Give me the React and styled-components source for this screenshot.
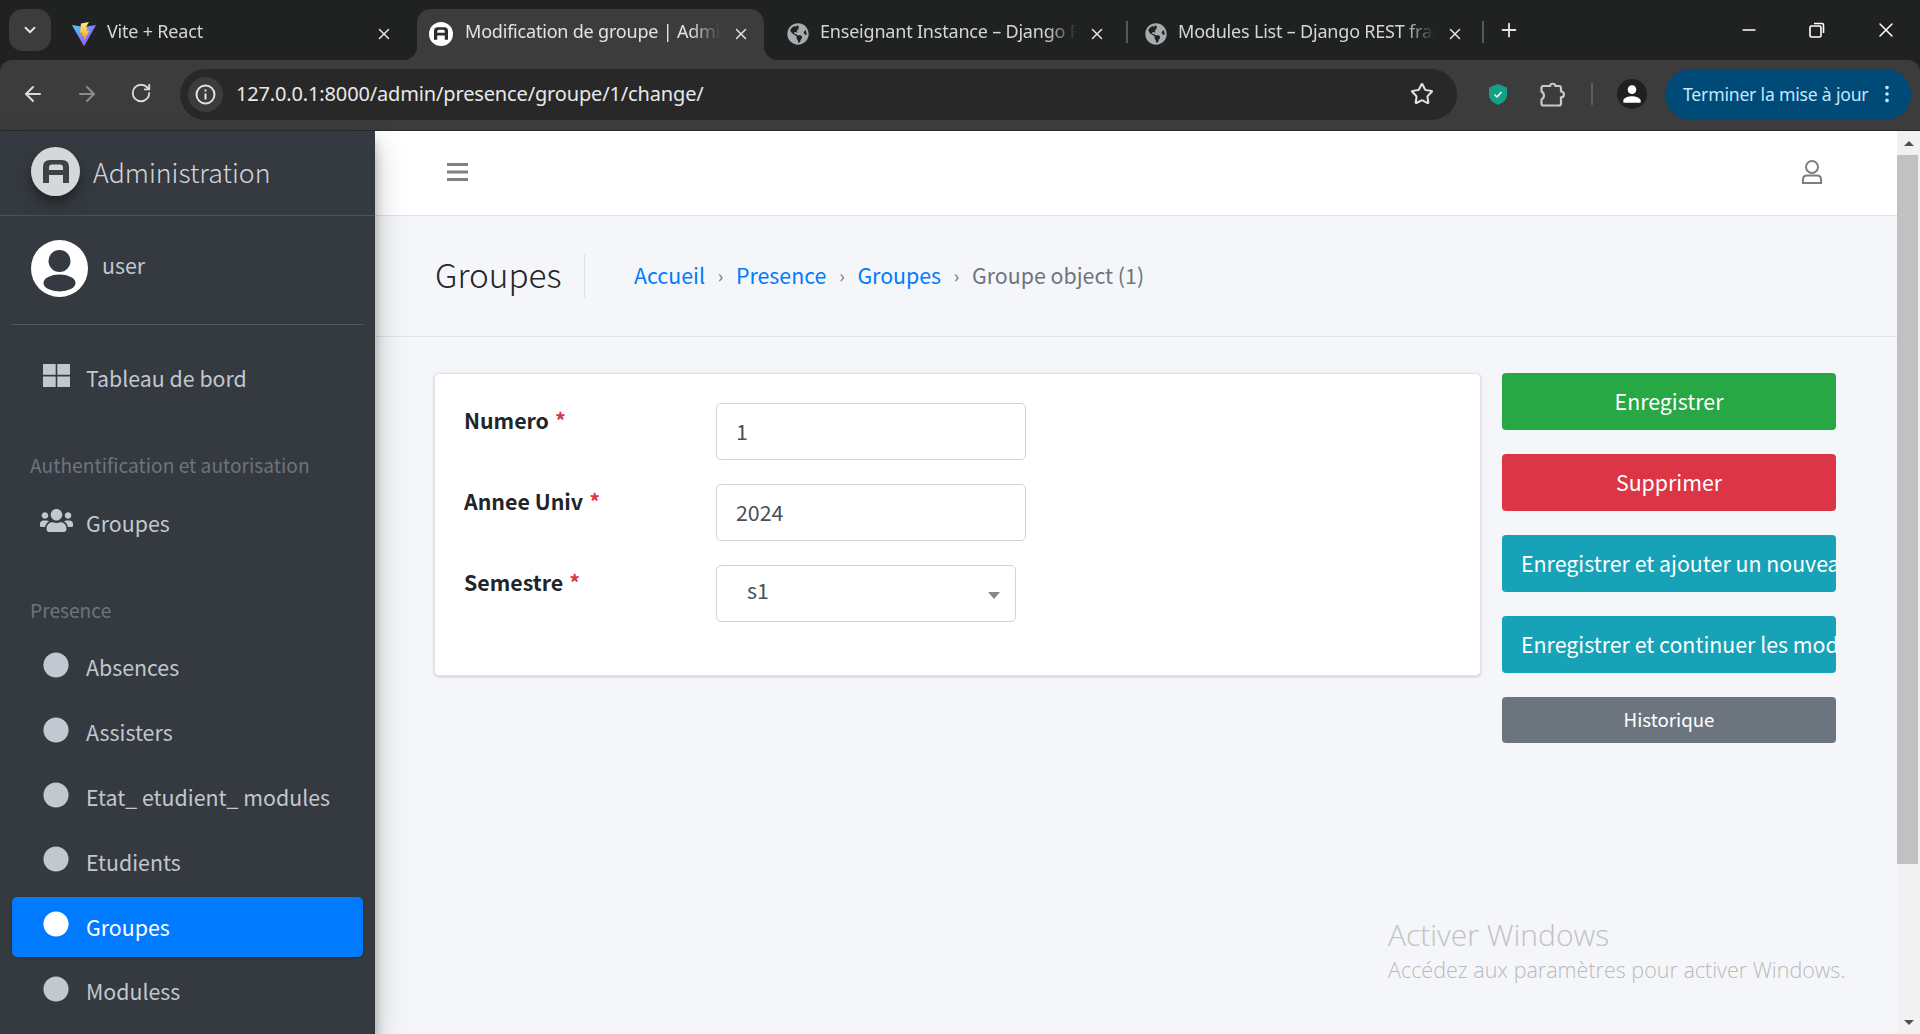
import React from "react";
import styled, { createGlobalStyle } from "styled-components";
import { ArrowLeft, ArrowRight, RotateCw, Star, X, Plus, Minus, ChevronDown, EllipsisVertical } from "lucide-react";
import { FaUsers, FaGlobeAmericas, FaCircle } from "react-icons/fa";
import { MdPerson } from "react-icons/md";

const siteFont = `"Noto Sans CJK SC", "Open Sans", sans-serif`;
const chromeFont = `"Noto Sans", "Open Sans", sans-serif`;

const GlobalStyle = createGlobalStyle`
  html, body {
    margin: 0;
    height: 100%;
    overflow: hidden;
    background: #f4f6f9;
  }
  * { box-sizing: border-box; }
`;

const Page = styled.div`
  width: 1920px;
  height: 1034px;
  display: flex;
  flex-direction: column;
  overflow: hidden;
  background: #202222;
  font-family: ${siteFont};
`;

/* browser frame */
const TabStrip = styled.div`
  height: 60px;
  flex: none;
  display: flex;
  padding: 9px 0 0 9px;
  font-family: ${chromeFont};
  color: #e3e3e3;
`;

const TabSearch = styled.div`
  width: 42px;
  height: 42px;
  border-radius: 14px;
  background: #3c3c3c;
  display: flex;
  align-items: center;
  justify-content: center;
  margin-right: 9px;
  color: #e3e3e3;
`;

const Tab = styled.div`
  position: relative;
  width: ${(p) => p.$width}px;
  height: 51px;
  flex: none;
  display: flex;
  align-items: center;
  padding: 0 ${(p) => p.$right}px 2px ${(p) => p.$pad}px;
  gap: 11px;
  background: ${(p) => (p.$active ? "#3c3c3c" : "transparent")};
  border-radius: 14px 14px 0 0;
  ${(p) =>
    p.$active &&
    `
    &::before, &::after {
      content: "";
      position: absolute;
      bottom: 0;
      width: 14px;
      height: 14px;
    }
    &::before { left: -14px; background: radial-gradient(circle at 0 0, transparent 14px, #3c3c3c 14.5px); }
    &::after { right: -14px; background: radial-gradient(circle at 100% 0, transparent 14px, #3c3c3c 14.5px); }
  `}
`;

const TabTitle = styled.span`
  flex: 1;
  min-width: 0;
  overflow: hidden;
  white-space: nowrap;
  font-size: 18px;
  line-height: 24px;
  letter-spacing: -0.2px;
  padding-bottom: 3px;
  margin-top: -3px;
  padding-left: ${(p) => (p.$active ? 1 : 0)}px;
  color: ${(p) => (p.$active ? "#e3e3e3" : "#d5d6d6")};
  -webkit-mask-image: linear-gradient(to right, #000 88%, transparent 100%);
  mask-image: linear-gradient(to right, #000 88%, transparent 100%);
`;

const TabFavicon = styled.span`
  width: 24px;
  height: 24px;
  flex: none;
  border-radius: 50%;
  background: #fff;
  display: flex;
  align-items: center;
  justify-content: center;
`;

const TabSeparator = styled.div`
  width: 2px;
  height: 22px;
  flex: none;
  align-self: center;
  margin-bottom: 6px;
  background: #55585a;
`;

const NewTab = styled.div`
  width: 50px;
  height: 42px;
  display: flex;
  align-items: center;
  justify-content: center;
  color: #e3e3e3;
`;

const WindowControls = styled.div`
  margin-left: auto;
  display: flex;
  height: 42px;
  align-items: center;
  color: #fff;
`;

const WindowButton = styled.div`
  width: 68px;
  display: flex;
  justify-content: center;
  &:last-child {
    margin-left: 1px;
  }
`;

const Toolbar = styled.div`
  height: 71px;
  flex: none;
  display: flex;
  align-items: center;
  background: #3c3c3c;
  border-radius: 12px 12px 0 0;
  border-bottom: 1px solid #2a2a2a;
  padding: 0 9px 2px 0;
  font-family: ${chromeFont};
  color: #e3e3e3;
`;

const NavIcon = styled.div`
  width: 54px;
  display: flex;
  justify-content: center;
  flex: none;
  color: ${(p) => (p.$dim ? "#8a8b8b" : "#d9dadb")};
`;

const NavIcons = styled.div`
  display: flex;
  padding-left: 6px;
  width: 180px;
  flex: none;
`;

const Omnibox = styled.div`
  width: 1277px;
  height: 51px;
  flex: none;
  display: flex;
  align-items: center;
  border-radius: 26px;
  background: #282828;
  padding: 0 23px 0 8px;
`;

const InfoBadge = styled.div`
  width: 35px;
  height: 35px;
  border-radius: 50%;
  background: #3c3c3c;
  display: flex;
  align-items: center;
  justify-content: center;
  margin-right: 13px;
`;

const UrlText = styled.span`
  flex: 1;
  font-size: 20px;
  line-height: 28px;
  letter-spacing: -0.15px;
  color: #e8e8e8;
`;

const ToolbarRight = styled.div`
  flex: 1;
  display: flex;
  align-items: center;
`;

const ToolIcon = styled.div`
  width: ${(p) => p.$w}px;
  flex: none;
  display: flex;
  justify-content: center;
  color: #c8c9c9;
`;

const ToolDivider = styled.div`
  width: 2px;
  height: 22px;
  flex: none;
  background: #5a5c5d;
`;

const Profile = styled.div`
  width: 30px;
  height: 30px;
  border-radius: 50%;
  background: #202020;
  color: #fff;
  display: flex;
  align-items: center;
  justify-content: center;
  flex: none;
`;

const UpdatePill = styled.div`
  width: 246px;
  height: 51px;
  margin-left: auto;
  flex: none;
  display: flex;
  align-items: center;
  justify-content: space-between;
  border-radius: 26px;
  background: #004a77;
  padding: 0 13px 0 18px;
  color: #c2e7ff;
  font-size: 17.6px;
  letter-spacing: -0.2px;
  white-space: nowrap;
`;

/* admin page */
const Body = styled.div`
  flex: 1;
  min-height: 0;
  display: flex;
`;

const Sidebar = styled.aside`
  width: 375px;
  flex: none;
  background: #343a40;
  position: relative;
  z-index: 2;
  box-shadow: 0 14px 28px rgba(0, 0, 0, 0.25), 0 10px 10px rgba(0, 0, 0, 0.22);
`;

const Brand = styled.div`
  height: 85px;
  display: flex;
  align-items: center;
  gap: 13px;
  padding: 0 0 4px 31px;
  border-bottom: 1px solid #4b545c;
`;

const BrandLogo = styled.div`
  width: 49px;
  height: 49px;
  flex: none;
  border-radius: 50%;
  background: #d6d7d9;
  display: flex;
  align-items: center;
  justify-content: center;
  box-shadow: 0 10px 20px rgba(0, 0, 0, 0.19), 0 6px 6px rgba(0, 0, 0, 0.23);
`;

const BrandText = styled.span`
  font-size: 26.7px;
  line-height: 40px;
  margin-top: 2px;
  font-weight: 300;
  color: rgba(255, 255, 255, 0.8);
`;

const UserPanel = styled.div`
  margin: 0 12px;
  height: 109px;
  padding: 24px 0 0 19px;
  display: flex;
  gap: 14px;
  border-bottom: 1px solid #4f5962;
`;

const UserName = styled.span`
  font-size: 21.35px;
  line-height: 36px;
  margin-top: 7px;
  color: #c2c7d0;
`;

const Nav = styled.nav`
  padding: 23px 12px 0;
  display: flex;
  flex-direction: column;
  gap: 5px;
`;

const NavHeader = styled.div`
  padding: 34px 0 5px 18px;
  font-size: 19.2px;
  line-height: 36px;
  color: #6c757d;
  white-space: nowrap;
`;

const NavLink = styled.a`
  height: 59.8px;
  display: flex;
  align-items: center;
  border-radius: 5px;
  background: ${(p) => (p.$active ? "#007bff" : "transparent")};
  color: ${(p) => (p.$active ? "#fff" : "#c2c7d0")};
  box-shadow: ${(p) => (p.$active ? "0 1px 3px rgba(0,0,0,.2)" : "none")};
`;

const NavIconBox = styled.span`
  width: 74px;
  flex: none;
  padding: 0 0 5px 31px;
  display: flex;
`;

const GroupIcon = styled(FaUsers)`
  margin-left: -3px;
  flex: none;
`;

const NavLabel = styled.span`
  font-size: 21.35px;
  line-height: 36px;
`;

const Main = styled.main`
  flex: 1;
  min-width: 0;
  position: relative;
  background: #f4f6f9;
`;

const TopBar = styled.div`
  height: 85px;
  display: flex;
  align-items: center;
  justify-content: space-between;
  padding: 0 75px 3px 72px;
  background: #fff;
  border-bottom: 1px solid #dee2e6;
`;

const PageHeader = styled.div`
  height: 121px;
  display: flex;
  align-items: center;
  padding-left: 60px;
  border-bottom: 1px solid #dee2e6;
`;

const Title = styled.h1`
  margin: 0;
  width: 150px;
  height: 44px;
  border-right: 1px solid #dfe2e6;
  font-size: 33.3px;
  line-height: 40px;
  font-weight: 300;
  color: #212529;
`;

const Crumbs = styled.div`
  margin-left: 49px;
  padding-bottom: 2px;
  display: flex;
  align-items: center;
  font-size: 21.35px;
  line-height: 36px;
  color: #6c757d;
  white-space: nowrap;
`;

const Crumb = styled.a`
  color: #007bff;
`;

const CrumbSep = styled.span`
  width: ${(p) => p.$w}px;
  text-align: center;
  font-size: 18px;
`;

const Content = styled.div`
  display: flex;
  gap: 21px;
  padding: 36px 61px 0 59px;
`;

const Card = styled.form`
  flex: 1;
  height: 303px;
  padding: 29px 0 0 29px;
  background: #fff;
  border: 1px solid #e2e4e8;
  border-radius: 5px;
  box-shadow: 0 1px 3px rgba(0, 0, 0, 0.18);
  display: grid;
  grid-template-columns: 252px 1fr;
  grid-auto-rows: 57px;
  row-gap: 24px;
`;

const FieldLabel = styled.label`
  font-size: 21.35px;
  line-height: 36px;
  margin-top: -1px;
  font-weight: 700;
  color: #212529;
`;

const Required = styled.span`
  color: #dc3545;
  margin-left: 6px;
`;

const TextInput = styled.input`
  width: 310px;
  height: 57px;
  padding: 0 19px 3px;
  border: 1px solid #ced4da;
  border-radius: 5px;
  background: #fff;
  font-family: ${siteFont};
  font-size: 21.35px;
  color: #495057;
  outline: none;
`;

const SelectBox = styled.div`
  position: relative;
  width: 300px;
  height: 57px;
  border: 1px solid #ced4da;
  border-radius: 5px;
  display: flex;
  align-items: center;
  padding: 0 0 9px 30px;
  font-size: 21.35px;
  color: #495057;
  &::after {
    content: "";
    position: absolute;
    right: 15px;
    top: 26px;
    border-style: solid;
    border-width: 7px 6px 0 6px;
    border-color: #888 transparent transparent transparent;
  }
`;

const Actions = styled.div`
  width: 334px;
  flex: none;
  display: flex;
  flex-direction: column;
  gap: 24px;
`;

const ActionButton = styled.a`
  height: ${(p) => (p.$small ? 46 : 57)}px;
  display: block;
  padding: 0 ${(p) => (p.$small ? 0 : 19)}px;
  background: ${(p) => p.$bg};
  border-radius: 4px;
  color: #fff;
  font-size: ${(p) => (p.$small ? 18.7 : 21.35)}px;
  line-height: ${(p) => (p.$small ? 44 : 55)}px;
  text-align: center;
  white-space: nowrap;
  overflow: hidden;
`;

const Watermark = styled.div`
  position: absolute;
  left: 1013px;
  top: 784px;
  font-family: "Open Sans", sans-serif;
  font-weight: 300;
  color: #c1c2c4;
  white-space: nowrap;
`;

const WatermarkTitle = styled.div`
  font-size: 30px;
  line-height: 40px;
`;

const WatermarkSub = styled.div`
  font-size: 21.5px;
  line-height: 30px;
  color: #b9babc;
`;

const ScrollTrack = styled.div`
  width: 23px;
  flex: none;
  display: flex;
  flex-direction: column;
  background: #f1f1f1;
`;

const ScrollArrow = styled.div`
  height: 24px;
  flex: none;
  margin-top: ${(p) => (p.$up ? 0 : "auto")};
  display: flex;
  align-items: center;
  justify-content: center;
  &::before {
    content: "";
    border-style: solid;
    border-width: ${(p) => (p.$up ? "0 5px 5px 5px" : "5px 5px 0 5px")};
    border-color: ${(p) =>
      p.$up
        ? "transparent transparent #505050 transparent"
        : "#505050 transparent transparent transparent"};
  }
`;

const ScrollThumb = styled.div`
  height: 709px;
  width: 21px;
  background: #c1c1c1;
`;

const ViteLogo = () => (
  <svg width="24" height="24" viewBox="0 0 24 24">
    <defs>
      <linearGradient id="viteA" x1="0" y1="0" x2="1" y2="1">
        <stop offset="0" stopColor="#41d1ff" />
        <stop offset="1" stopColor="#bd34fe" />
      </linearGradient>
      <linearGradient id="viteB" x1="0" y1="0" x2="0" y2="1">
        <stop offset="0" stopColor="#ffea83" />
        <stop offset="1" stopColor="#ffa800" />
      </linearGradient>
    </defs>
    <path d="M0 3 L12 5 L24 3 L12.500 23.600 Q12 24 11.500 23.600 Z" fill="url(#viteA)" />
    <path d="M17 0 L9 1.500 L8 11 L10.500 10.500 L9.800 14 L12.400 13.400 L11.800 18.500 L17.500 8.500 L14.500 9 L15.500 5.500 L13.500 5.800 Z" fill="url(#viteB)" />
  </svg>
);

const AdminMark = ({ width, height, color }) => (
  <svg width={width} height={height} viewBox="0 0 26 23">
    <path
      d="M0 23 V7 Q0 0 7 0 H19 Q26 0 26 7 V23 H20 V15 H6 V23 Z M6 10 H20 V7.500 Q20 4.500 17 4.500 H9 Q6 4.500 6 7.500 Z"
      fill={color}
      fillRule="evenodd"
    />
  </svg>
);

const UserAvatar = () => (
  <svg width="57" height="57" viewBox="0 0 57 57">
    <circle cx="28.500" cy="28.500" r="28.500" fill="#fff" />
    <circle cx="28.500" cy="21" r="11" fill="#343a40" />
    <ellipse cx="28.500" cy="43" rx="16" ry="8.500" fill="#343a40" />
  </svg>
);

const Dashboard = () => (
  <svg width="27" height="23" viewBox="0 0 27 23">
    <path d="M0 0 H12.700 V10.800 H0 Z M14.300 0 H27 V10.800 H14.300 Z M0 12.400 H12.700 V23 H0 Z M14.300 12.400 H27 V23 H14.300 Z" fill="#c2c7d0" />
  </svg>
);

const Shield = () => (
  <svg width="18" height="21" viewBox="0 0 18 21">
    <path d="M9 0 L18 3.500 V11 Q18 17 9 21 Q0 17 0 11 V3.500 Z" fill="#13a085" />
    <path d="M5.500 10.500 L8 13 L12.500 8" stroke="#fff" strokeWidth="1.500" fill="none" />
  </svg>
);

const PuzzleIcon = () => (
  <svg width="26" height="25" viewBox="0 0 26 25" fill="none" stroke="#c8c9c9" strokeWidth="2.200" strokeLinejoin="round">
    <path d="M3.500 4 H10 a2.800 2.800 0 0 1 5.500 0 H19 Q21 4 21 6 V9.500 a2.900 2.900 0 0 1 0 5.800 V21.500 Q21 23.500 19 23.500 H3.500 Q1.500 23.500 1.500 21.500 V17.500 a4.500 4.500 0 0 0 0 -8 V6 Q1.500 4 3.500 4 Z" />
  </svg>
);

const InfoGlyph = () => (
  <svg width="21" height="21" viewBox="0 0 21 21">
    <circle cx="10.500" cy="10.500" r="9" stroke="#e3e3e3" strokeWidth="2" fill="none" />
    <path d="M10.500 9.500 V15.500 M10.500 5.500 V7.500" stroke="#e3e3e3" strokeWidth="2" />
  </svg>
);

const Hamburger = () => (
  <svg width="21" height="18" viewBox="0 0 21 18">
    <path d="M0 0 H21 V3 H0 Z M0 7.500 H21 V10.500 H0 Z M0 15 H21 V18 H0 Z" fill="#7f8285" />
  </svg>
);

const OutlineUser = () => (
  <svg width="20" height="24" viewBox="0 0 20 24" fill="none" stroke="#7b7f83" strokeWidth="2">
    <circle cx="10" cy="7" r="6" />
    <path d="M1 23 V19.500 Q1 15.500 5 15.500 H15 Q19 15.500 19 19.500 V23 Z" />
  </svg>
);

const menuItems = ["Absences", "Assisters", "Etat_ etudient_ modules", "Etudients", "Groupes", "Moduless"];

const App = () => {
  return (
    <Page>
      <GlobalStyle />
      <TabStrip>
        <TabSearch>
          <ChevronDown size={18} strokeWidth={2.500} />
        </TabSearch>
        <Tab $width={357} $pad={12} $right={24}>
          <ViteLogo />
          <TabTitle>Vite + React</TabTitle>
          <X size={18} />
        </Tab>
        <Tab $width={347} $pad={12} $right={14} $active>
          <TabFavicon>
            <AdminMark width={14} height={13} color="#2a2c2e" />
          </TabFavicon>
          <TabTitle $active>Modification de groupe | Administration</TabTitle>
          <X size={18} />
        </Tab>
        <Tab $width={362} $pad={23} $right={20}>
          <FaGlobeAmericas size={22} color="#a8abb0" />
          <TabTitle>Enseignant Instance – Django REST framework</TabTitle>
          <X size={18} />
        </Tab>
        <TabSeparator />
        <Tab $width={354} $pad={17} $right={18}>
          <FaGlobeAmericas size={22} color="#a8abb0" />
          <TabTitle>Modules List – Django REST framework</TabTitle>
          <X size={18} />
        </Tab>
        <TabSeparator />
        <NewTab>
          <Plus size={22} />
        </NewTab>
        <WindowControls>
          <WindowButton>
            <Minus size={20} />
          </WindowButton>
          <WindowButton>
            <svg width="18" height="18" viewBox="0 0 18 18" fill="none" stroke="#fff" strokeWidth="1.600">
              <rect x="2" y="5" width="11" height="11" rx="1.500" />
              <path d="M6 2.500 H14 Q15.500 2.500 15.500 4 V12" />
            </svg>
          </WindowButton>
          <WindowButton>
            <X size={24} strokeWidth={1.500} />
          </WindowButton>
        </WindowControls>
      </TabStrip>
      <Toolbar>
        <NavIcons>
          <NavIcon>
            <ArrowLeft size={24} />
          </NavIcon>
          <NavIcon $dim>
            <ArrowRight size={24} />
          </NavIcon>
          <NavIcon>
            <RotateCw size={22} />
          </NavIcon>
        </NavIcons>
        <Omnibox>
          <InfoBadge>
            <InfoGlyph />
          </InfoBadge>
          <UrlText>127.0.0.1:8000/admin/presence/groupe/1/change/</UrlText>
          <Star size={24} color="#e3e3e3" />
        </Omnibox>
        <ToolbarRight>
          <ToolIcon $w={82}>
            <Shield />
          </ToolIcon>
          <ToolIcon $w={28}>
            <PuzzleIcon />
          </ToolIcon>
          <ToolIcon $w={24} />
          <ToolDivider />
          <ToolIcon $w={24} />
          <Profile>
            <MdPerson size={26} />
          </Profile>
          <UpdatePill>
            Terminer la mise à jour
            <EllipsisVertical size={22} />
          </UpdatePill>
        </ToolbarRight>
      </Toolbar>
      <Body>
        <Sidebar>
          <Brand>
            <BrandLogo>
              <AdminMark width={26} height={23} color="#3f4245" />
            </BrandLogo>
            <BrandText>Administration</BrandText>
          </Brand>
          <UserPanel>
            <UserAvatar />
            <UserName>user</UserName>
          </UserPanel>
          <Nav>
            <NavLink>
              <NavIconBox>
                <Dashboard />
              </NavIconBox>
              <NavLabel>Tableau de bord</NavLabel>
            </NavLink>
            <NavHeader>Authentification et autorisation</NavHeader>
            <NavLink>
              <NavIconBox>
                <GroupIcon size={33} color="#c2c7d0" />
              </NavIconBox>
              <NavLabel>Groupes</NavLabel>
            </NavLink>
            <NavHeader>Presence</NavHeader>
            {menuItems.map((item) => (
              <NavLink key={item} $active={item === "Groupes"}>
                <NavIconBox>
                  <FaCircle size={26} />
                </NavIconBox>
                <NavLabel>{item}</NavLabel>
              </NavLink>
            ))}
          </Nav>
        </Sidebar>
        <Main>
          <TopBar>
            <Hamburger />
            <OutlineUser />
          </TopBar>
          <PageHeader>
            <Title>Groupes</Title>
            <Crumbs>
              <Crumb>Accueil</Crumb>
              <CrumbSep $w={31}>›</CrumbSep>
              <Crumb>Presence</Crumb>
              <CrumbSep $w={31}>›</CrumbSep>
              <Crumb>Groupes</Crumb>
              <CrumbSep $w={31}>›</CrumbSep>
              <span>Groupe object (1)</span>
            </Crumbs>
          </PageHeader>
          <Content>
            <Card>
              <FieldLabel>
                Numero<Required>*</Required>
              </FieldLabel>
              <TextInput readOnly value="1" />
              <FieldLabel>
                Annee Univ<Required>*</Required>
              </FieldLabel>
              <TextInput readOnly value="2024" />
              <FieldLabel>
                Semestre<Required>*</Required>
              </FieldLabel>
              <SelectBox>s1</SelectBox>
            </Card>
            <Actions>
              <ActionButton $bg="#28a745">Enregistrer</ActionButton>
              <ActionButton $bg="#dc3545">Supprimer</ActionButton>
              <ActionButton $bg="#17a2b8">Enregistrer et ajouter un nouveau</ActionButton>
              <ActionButton $bg="#17a2b8">Enregistrer et continuer les modifications</ActionButton>
              <ActionButton $bg="#6c757d" $small>
                Historique
              </ActionButton>
            </Actions>
          </Content>
          <Watermark>
            <WatermarkTitle>Activer Windows</WatermarkTitle>
            <WatermarkSub>Accédez aux paramètres pour activer Windows.</WatermarkSub>
          </Watermark>
        </Main>
        <ScrollTrack>
          <ScrollArrow $up />
          <ScrollThumb />
          <ScrollArrow />
        </ScrollTrack>
      </Body>
    </Page>
  );
};

export default App;
